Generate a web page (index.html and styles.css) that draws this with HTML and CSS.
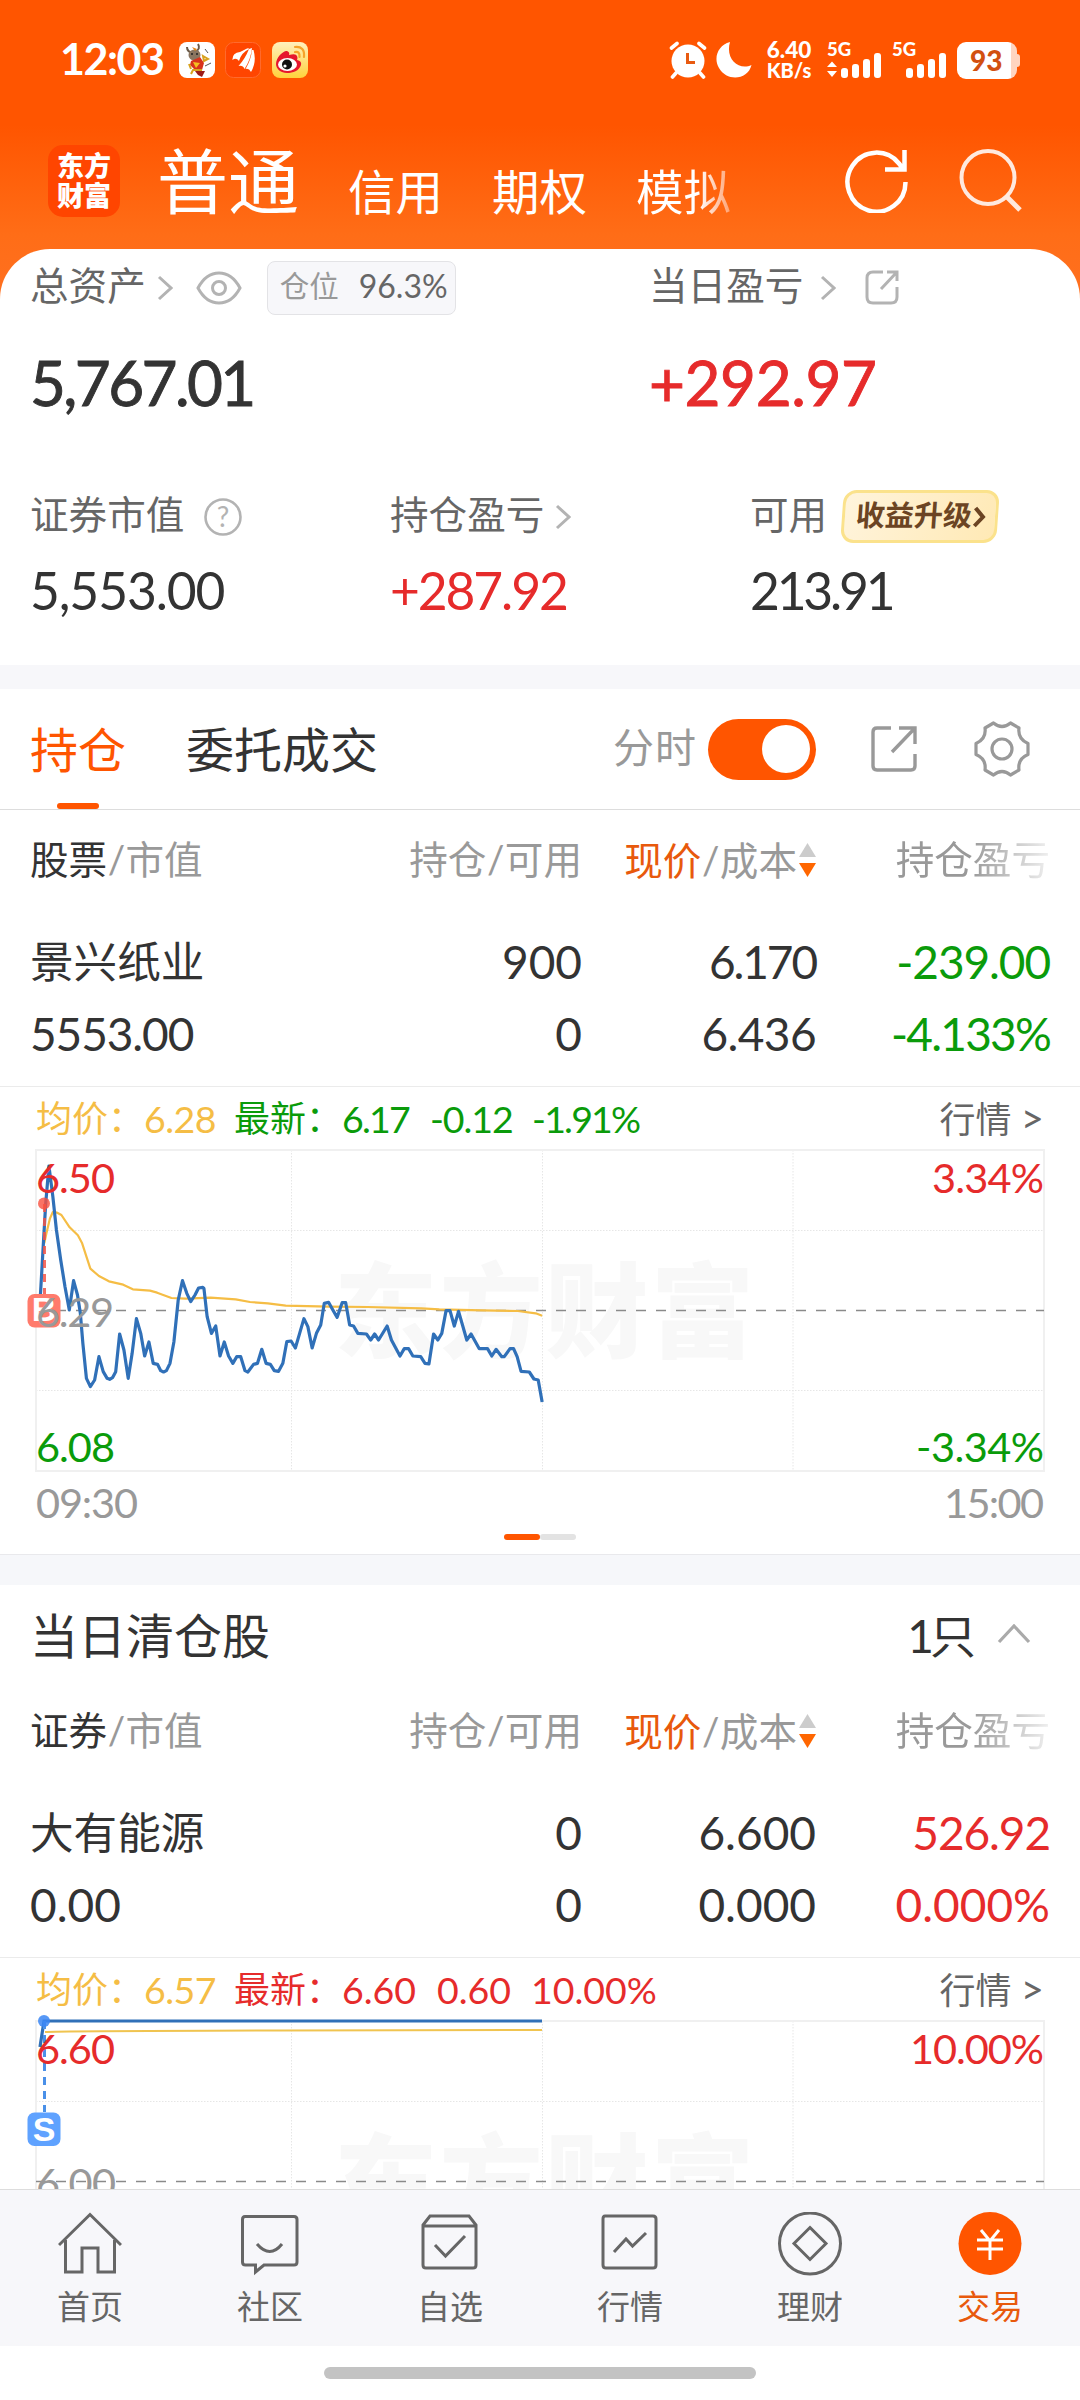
FILE: index.html
```html
<!DOCTYPE html>
<html lang="zh-CN">
<head>
<meta charset="utf-8">
<title>交易 - 持仓</title>
<link rel="stylesheet" href="styles.css">
</head>
<body>
<svg class="defs" width="0" height="0">
  <defs>
    <g id="grid">
      <path d="M36 90.5H1044M36 250.5H1044M291.5 10V331M542.5 10V331M793 10V331" stroke="#e6e6e6" stroke-width="1" stroke-dasharray="1.5 1.5"/>
      <rect x="36" y="10" width="1008" height="321" fill="none" stroke="#f0f0f0" stroke-width="2"/>
    </g>
    <g id="share" fill="none" stroke="currentColor">
      <path d="M20 2H6Q2 2 2 6V40Q2 44 6 44H40Q44 44 44 40V28M28 2H44V18M44 2L21 26"/>
    </g>
  </defs>
</svg>
<div class="app">
  <main class="scroll">
    <section class="hero">
      <div class="status">
        <div class="status-left">
          <span class="time">12:03</span>
          <svg width="36" height="36" viewBox="0 0 36 36"><rect width="36" height="36" rx="8" fill="#fff"/><path d="M8 5q0 5 6 6M19 2q3 5-3 8" stroke="#6b5a48" stroke-width="2" fill="none"/><ellipse cx="15.500" cy="13" rx="6" ry="5.500" fill="#8a7560"/><path d="M13 5l5 2-2 2z" fill="#e0861a"/><circle cx="13" cy="12" r="1" fill="#222"/><circle cx="18" cy="12" r="1" fill="#222"/><path d="M12 19l9-4 4 6-2 7-8-1-4-4z" fill="#d8331c"/><path d="M14 20l7 1-4 5z" fill="#f4c020"/><path d="M24 14l5 3-4 2zM10 22l2 5M12 32l2-4h9" stroke="#d8a21c" stroke-width="2" fill="none"/><path d="M16 29h10l-3 6-4-2z" fill="#9c1c18"/><path d="M26 24l6-3M26 7l3 4" stroke="#555" fill="none"/></svg>
          <svg width="36" height="36" viewBox="0 0 36 36"><rect x=".5" y=".5" width="35" height="35" rx="8" fill="#ff4500" stroke="#ff6a2e"/><path d="M7.500 18Q7 11 15 10L22 6.500Q24 6 24 7Q16 11 14 19Q11 15 7.500 18zM13.500 24Q20 17 24 7L27 6Q26 17 19.500 27Q18 23 13.500 24zM20.500 27Q26 18 27 8L28.500 8Q32 20 26 30Q24 26 20.500 27z" fill="#fff"/></svg>
          <svg width="36" height="36" viewBox="0 0 36 36"><defs><linearGradient id="wb" x2="0" y2="1"><stop stop-color="#fff0bd"/><stop offset="1" stop-color="#ffd23c"/></linearGradient></defs><rect width="36" height="36" rx="8" fill="url(#wb)"/><path d="M4 22C4 15 12 8 15 9Q18 10 17 13Q24 11 25 14Q26 16 25 18Q30 19 29 23C27 29 21 31 15 31C9 31 4 27 4 22z" fill="#e6162d"/><ellipse cx="15.500" cy="22.500" rx="9.500" ry="6.500" fill="#fff"/><circle cx="15" cy="22.500" r="5" fill="#111"/><circle cx="13" cy="24" r="1.600" fill="#fff"/><path d="M23 5Q33 4 32 15M23 10Q28 9 27.500 15" fill="none" stroke="#f5a32a" stroke-width="2.200" stroke-linecap="round"/></svg>
        </div>
        <div class="status-right">
          <svg class="alarm" width="38" height="38" viewBox="0 0 38 38"><g stroke="#fff" stroke-width="3.600" stroke-linecap="round"><path d="M2.500 7L8 2.500M35.500 7L30 2.500M7 32L3.500 36M31 32L34.500 36"/></g><circle cx="19" cy="20" r="16.500" fill="#fff"/><path d="M18.500 12V21.500H26" fill="none" stroke="#e85a10" stroke-width="3"/></svg>
          <svg class="moon" width="38" height="38" viewBox="0 0 38 38"><path d="M15 1C3 4-2 17 4 27C12 41 33 39 36.500 24C24 30 10 18 15 1z" fill="#fff"/></svg>
          <div class="speed"><span>6.40</span><span>KB/s</span></div>
          <div class="sig"><span>5G</span><svg width="56" height="26" viewBox="0 0 56 26" fill="#fff"><path d="M0 11L5 5.500L10 11zM0 15H10L5 21z" transform="translate(0 4)"/><rect x="14" y="16" width="7" height="10" rx="3"/><rect x="25" y="12" width="7" height="14" rx="3"/><rect x="36" y="7" width="7" height="19" rx="3"/><rect x="47" y="1" width="7" height="25" rx="3"/></svg></div>
          <div class="sig"><span>5G</span><svg width="56" height="26" viewBox="0 0 56 26" fill="#fff"><rect x="14" y="16" width="7" height="10" rx="3"/><rect x="25" y="12" width="7" height="14" rx="3"/><rect x="36" y="7" width="7" height="19" rx="3"/><rect x="47" y="1" width="7" height="25" rx="3"/></svg></div>
          <div class="battery"><span>93</span></div>
        </div>
      </div>
      <header class="topbar">
        <div class="logo"><span>东方</span><span>财富</span></div>
        <nav class="modes"><span class="mode-on">普通</span><span>信用</span><span>期权</span><span class="mode-fade">模拟</span></nav>
        <svg class="refresh" width="66" height="66" viewBox="0 0 66 66" fill="none" stroke="#fff" stroke-width="4.500"><path d="M61.500 35A29 29.500 0 1 1 55 16.500L58.500 21M60.500 3V22.500H41"/></svg>
        <svg width="66" height="66" viewBox="0 0 66 66" fill="none" stroke="#ffe9de" stroke-width="4"><circle cx="31" cy="30.500" r="26.500"/><path d="M50 50L63 63" stroke-width="5"/></svg>
      </header>
      <div class="summary">
        <div class="line assets">
          <div class="cell big-l"><span class="up">总资产</span><svg class="chev" width="16" height="26" viewBox="0 0 16 26"><path d="M2 2L14 13L2 24"/></svg>
            <svg class="eye" width="46" height="34" viewBox="0 0 46 34" fill="none" stroke="#b3b3b3" stroke-width="3"><path d="M2 17Q10 2 23 2T44 17Q36 32 23 32T2 17z"/><circle cx="23" cy="17" r="6.500"/></svg>
            <span class="ratio"><i>仓位</i><b>96.3%</b></span></div>
          <div class="cell"><span class="up">当日盈亏</span><svg class="chev c2" width="16" height="26" viewBox="0 0 16 26"><path d="M2 2L14 13L2 24"/></svg>
            <svg class="share-s" width="34" height="35" viewBox="0 0 34 35" fill="none" stroke="#b3b3b3" stroke-width="3"><path d="M18 2H8Q2 2 2 8V27Q2 33 8 33H26Q32 33 32 27V17M22 2H32V11M31.500 2.500L16 19"/></svg></div>
        </div>
        <div class="line totals"><span class="big-l ls-26">5,767.01</span><span class="red pnl">+292.97</span></div>
        <div class="thirds labels">
          <div class="cell"><span class="up">证券市值</span><svg class="help" width="38" height="38" viewBox="0 0 38 38"><circle cx="19" cy="19" r="17.500" fill="none" stroke="#b3b3b3" stroke-width="2.600"/><text x="19" y="29" text-anchor="middle" font-size="28" fill="#b3b3b3">?</text></svg></div>
          <div class="cell"><span class="up">持仓盈亏</span><svg class="chev c3" width="16" height="26" viewBox="0 0 16 26"><path d="M2 2L14 13L2 24"/></svg></div>
          <div class="cell"><span class="up">可用</span><span class="badge"><span>收益升级</span><svg width="13" height="22" viewBox="0 0 13 22"><path d="M2 2L10 11L2 20" fill="none" stroke="#6b4423" stroke-width="4"/></svg></span></div>
        </div>
        <div class="thirds values"><span class="ls-11">5,553.00</span><span class="red ls-21">+287.92</span><span class="ls-32">213.91</span></div>
      </div>
    </section>
    <div class="gap"></div>
    <section>
      <div class="tabs">
        <span class="tab on">持仓</span><span class="tab">委托成交</span>
        <span class="minute">分时</span><span class="toggle"></span>
        <svg class="t-share" width="46" height="46" viewBox="0 0 46 46" stroke-width="3.400"><use href="#share"/></svg>
        <svg class="gear" width="56" height="56" viewBox="0 0 56 56" fill="none" stroke="#999" stroke-width="3.200" stroke-linejoin="round"><path d="M19.500 2Q28 9 36.500 2L45 7Q43.500 18 54 22.500V33.500Q43.500 38 45 49L36.500 54Q28 47 19.500 54L11 49Q12.500 38 2 33.500V22.500Q12.500 18 11 7z"/><circle cx="28" cy="28" r="10"/></svg>
      </div>
      <div class="cols head">
        <span><em>股票</em><s>/</s>市值</span><span>持仓<s>/</s>可用</span>
        <span class="sort"><em class="or">现价</em><s>/</s>成本<svg width="17" height="36" viewBox="0 0 17 36"><path d="M8.500 1L17 15H0z" fill="#ccc"/><path d="M0 21H17L8.500 35z" fill="#f60"/></svg></span><span class="fade">持仓盈亏</span>
      </div>
      <div class="rows">
        <div class="cols row"><span class="name">景兴纸业</span><span>900</span><span class="ls-21">6.170</span><span class="green ls-11">-239.00</span></div>
        <div class="cols row"><span class="ls-11">5553.00</span><span>0</span><span class="ls-06">6.436</span><span class="green ls-18">-4.133%</span></div>
      </div>
      <div class="quote">
        <span class="avg">均价：</span><span class="avg q1">6.28</span><span class="green q2">最新：</span><span class="green q3 ls-18">6.17</span><span class="green q4 ls-11">-0.12</span><span class="green ls-18">-1.91%</span><span class="more">行情 <i>&gt;</i></span>
      </div>
      <svg class="chart" width="1080" height="390" viewBox="0 0 1080 390">
        <use href="#grid"/>
        <text class="mark" x="334" y="210" textLength="420">东方财富</text>
        <path d="M36 170.500H1044" stroke="#8a8a8a" stroke-width="1.300" stroke-dasharray="10 10"/>
        <g transform="translate(0 -60) scale(.357143 .333333)" fill="none" stroke-linejoin="round">
          <polyline vector-effect="non-scaling-stroke" stroke="#f5bd45" stroke-width="2.200" points="124,490 130,460 140,415 148,396 160,398 172,405 195,442 218,466 230,490 242,530 253,566 277,588 305,604 345,614 372,628 420,632 440,638 480,654 520,656 590,653 660,658 700,666 750,670 800,677 920,680 1030,681 1180,685 1230,688 1350,691 1450,693 1500,700 1518,707"/>
          <polyline vector-effect="non-scaling-stroke" stroke="#3070b8" stroke-width="3.200" points="113,648 122,480 128,370 137,258 148,350 158,450 170,540 182,620 194,690 206,602 217,645 225,700 232,790 242,895 253,920 265,900 277,830 289,875 300,895 307,898 315,893 324,875 335,762 347,810 359,895 370,820 382,716 394,760 405,828 417,786 429,850 441,853 450,872 458,876 466,872 476,850 487,785 499,660 511,602 523,640 534,665 546,645 556,624 568,622 571,625 580,710 592,760 604,738 616,828 628,786 640,828 652,850 663,830 674,830 686,872 694,876 710,853 721,850 733,808 745,850 757,853 768,872 780,874 792,850 803,785 815,783 827,804 839,760 851,716 862,740 874,804 886,760 898,735 908,670 920,667 932,690 944,712 958,668 968,668 979,735 990,738 1002,760 1026,762 1038,780 1049,762 1060,780 1084,738 1096,780 1120,828 1132,806 1144,806 1156,828 1178,830 1190,850 1201,852 1214,762 1226,780 1237,760 1249,692 1260,692 1272,738 1284,694 1307,780 1319,762 1342,806 1365,806 1377,828 1389,808 1405,830 1412,830 1428,806 1438,806 1448,830 1459,874 1482,876 1495,897 1507,900 1518,966"/>
        </g>
        <path d="M44.500 64V154" stroke="#f25548" stroke-opacity=".85" stroke-width="3" stroke-dasharray="8 6"/>
        <circle cx="44" cy="63.500" r="6" fill="#f9503f" fill-opacity=".8"/>
        <rect x="27.500" y="154" width="33" height="33.500" rx="7" fill="#ff7b6c"/>
        <text class="flag" x="44" y="181" text-anchor="middle">B</text>
        <text class="red" x="36" y="53" textLength="79">6.50</text>
        <text class="gray" x="36" y="187" textLength="78">6.29</text>
        <text class="green" x="36" y="322" textLength="79">6.08</text>
        <text class="red" x="932" y="53" textLength="112">3.34%</text>
        <text class="green" x="916" y="322" textLength="128">-3.34%</text>
        <text class="gray" x="36" y="378" textLength="102">09:30</text>
        <text class="gray" x="944" y="378" textLength="100">15:00</text>
      </svg>
      <div class="pager"><i></i><i></i></div>
    </section>
    <div class="gap gap2"></div>
    <section>
      <div class="cleared"><span>当日清仓股</span><span class="count"><b>1</b>只</span><svg width="34" height="20" viewBox="0 0 34 20"><path d="M2 18L17 2L32 18" fill="none" stroke="#aaa" stroke-width="3.200"/></svg></div>
      <div class="cols head">
        <span><em>证券</em><s>/</s>市值</span><span>持仓<s>/</s>可用</span>
        <span class="sort"><em class="or">现价</em><s>/</s>成本<svg width="17" height="36" viewBox="0 0 17 36"><path d="M8.500 1L17 15H0z" fill="#ccc"/><path d="M0 21H17L8.500 35z" fill="#f60"/></svg></span><span class="fade">持仓盈亏</span>
      </div>
      <div class="rows">
        <div class="cols row"><span class="name">大有能源</span><span>0</span><span>6.600</span><span class="red ls-11">526.92</span></div>
        <div class="cols row"><span>0.00</span><span>0</span><span>0.000</span><span class="red">0.000%</span></div>
      </div>
      <div class="quote">
        <span class="avg">均价：</span><span class="avg q1">6.57</span><span class="red q2">最新：</span><span class="red q3b">6.60</span><span class="red q4b">0.60</span><span class="red">10.00%</span><span class="more">行情 <i>&gt;</i></span>
      </div>
      <svg class="chart" width="1080" height="390" viewBox="0 0 1080 390">
        <use href="#grid"/>
        <text class="mark" x="334" y="210" textLength="420">东方财富</text>
        <path d="M36 170.500H1044" stroke="#8a8a8a" stroke-width="1.300" stroke-dasharray="10 10"/>
        <path d="M45 21Q60 19.500 542 19" fill="none" stroke="#f0c450" stroke-width="2"/>
        <path d="M40 36L44 10H542" fill="none" stroke="#3070b8" stroke-width="3.200"/>
        <path d="M44.500 10V101" stroke="#4a90e8" stroke-width="3" stroke-dasharray="8 6"/>
        <circle cx="44" cy="10" r="6" fill="#3a86f5" fill-opacity=".85"/>
        <rect x="27.500" y="101.500" width="33" height="33.500" rx="7" fill="#5fa2ff"/>
        <text class="flag" x="44" y="130" text-anchor="middle">S</text>
        <text class="red" x="36" y="53" textLength="79">6.60</text>
        <text class="gray" x="36" y="187" textLength="80">6.00</text>
        <text class="red" x="910" y="53" textLength="134">10.00%</text>
      </svg>
    </section>
  </main>
  <nav class="nav">
    <div><svg width="64" height="64" viewBox="0 0 64 64"><path d="M1 33L32 2.500L63 33M7.500 28V60H24V36H40V60H56.500V28"/></svg><span>首页</span></div>
    <div><svg width="64" height="64" viewBox="0 0 64 64"><path d="M7 4.500H56Q59 4.500 59 7.500V50Q59 53 56 53H26L17.500 60V53H7.500Q4.500 53 4.500 50V7.500Q4.500 4.500 7 4.500M19 32Q32 47 44 32"/></svg><span>社区</span></div>
    <div><svg width="64" height="64" viewBox="0 0 64 64"><path d="M5 13L12 4H51L58 13V53Q58 56 55 56H8Q5 56 5 53zM5 14H58M17 33L27.500 44L47 24"/></svg><span>自选</span></div>
    <div><svg width="64" height="64" viewBox="0 0 64 64"><path d="M7 4H55Q58 4 58 7V53Q58 56 55 56H8Q5 56 5 53V7Q5 4 7 4M16 40L28 27L34.500 34L48 21"/></svg><span>行情</span></div>
    <div><svg width="64" height="64" viewBox="0 0 64 64"><circle cx="32" cy="31.500" r="30.500"/><path d="M32 15.500L48 31.500L32 47.500L16 31.500z"/></svg><span>理财</span></div>
    <div class="active"><svg width="64" height="64" viewBox="0 0 64 64"><circle cx="32" cy="31.500" r="31.500" fill="#f50" stroke="none"/><path d="M23 18L32 29L41 18M32 29V48M19 28H45M19 37H45" stroke="#fff"/></svg><span>交易</span></div>
  </nav>
  <div class="homebar"><i></i></div>
</div>
</body>
</html>
```

FILE: styles.css
```css
* { box-sizing: border-box; }
body { margin: 0; background: #fff; color: #333; font-family: Lato, "Noto Sans CJK SC", sans-serif; }
i, em { font-style: normal; }
s { text-decoration: none; display: inline-block; width: 18.4px; text-align: center; }
svg { flex: none; display: block; }
.defs { position: absolute; }
.app { width: 1080px; height: 2400px; display: flex; flex-direction: column; overflow: hidden; }
.scroll { flex: 1; min-height: 0; overflow: hidden; }
.red { color: #e62b2b; fill: #e62b2b; }
.green { color: #0a9b0a; fill: #0a9b0a; }
.gray { fill: #999; }

.ls-06 { letter-spacing: -0.6px; }
.ls-11 { letter-spacing: -1.1px; }
.ls-18 { letter-spacing: -1.8px; }
.ls-21 { letter-spacing: -2.1px; }
.ls-26 { letter-spacing: -2.6px; }
.ls-32 { letter-spacing: -3.2px; }

.hero { background: linear-gradient(#ff5500 125px, #ff6d17 235px, #ff7020 300px); }
.status { height: 120px; padding: 0 59px 0 60px; display: flex; justify-content: space-between; color: #fff; }
.status-left, .status-right { display: flex; align-items: center; height: 120px; }
.status-left { gap: 10.5px; }
.time { font-size: 43px; font-weight: 700; width: 108px; letter-spacing: -1.5px; line-height: 50px; padding-bottom: 2px; }
.alarm { margin-right: 8px; }
.moon { margin-right: 12px; }
.speed { display: flex; flex-direction: column; width: 48px; margin-right: 14px; text-align: center; font-size: 22.5px; line-height: 21px; font-weight: 900; }
.speed span:last-child { font-size: 20px; }
.sig { width: 55px; height: 36px; position: relative; margin-right: 10px; }
.sig span { position: absolute; left: 0; top: -3px; font-size: 18.5px; line-height: 20px; font-weight: 900; }
.sig svg { margin-top: 10px; }
.battery { width: 60px; height: 37px; border-radius: 9px; background: linear-gradient(90deg, #fff 54px, #ffd5c0 54px); color: #d2500f; font-size: 28px; font-weight: 900; line-height: 37px; padding-left: 13px; margin-right: 4px; position: relative; }
.battery::after { content: ""; position: absolute; left: 60px; top: 12px; width: 3px; height: 13px; border-radius: 0 3px 3px 0; background: #ffd5c0; }

.topbar { height: 129px; display: flex; padding-left: 48px; }
.logo { width: 72px; height: 72px; margin-top: 25px; border-radius: 15px; background: #ff4500; color: #fff; display: flex; flex-direction: column; align-items: center; justify-content: center; font-size: 27px; line-height: 30px; font-weight: 900; }
.modes { display: flex; align-items: flex-end; color: #fff; margin-left: 37px; height: 101px; width: 687px; font-size: 47.5px; line-height: 58px; }
.modes span { width: 144px; }
.modes .mode-on { font-size: 71px; line-height: 74px; width: 191px; padding-bottom: 3px; }
.modes .mode-fade { background: linear-gradient(90deg, #fff 62px, #ffa070 95px); -webkit-background-clip: text; background-clip: text; color: transparent; }
.refresh { margin-right: 47px; }
.topbar > svg { margin-top: 27px; }

.summary { background: #fff; border-radius: 50px 50px 0 0; height: 416px; padding-left: 30px; }
.line { display: flex; align-items: center; }
.cell { display: flex; align-items: center; }
.up { line-height: 56px; padding-bottom: 5px; }
.big-l { width: 619px; }
.assets { height: 77px; font-size: 38.600px; color: #666; }
.chev { fill: none; stroke: #b3b3b3; stroke-width: 3; margin-left: 11px; }
.c2 { margin-left: 17px; }
.c3 { margin-left: 11px; }
.eye { margin-left: 23px; }
.share-s { margin-left: 29px; }
.ratio { display: flex; align-items: center; width: 189px; height: 54px; margin-left: 25px; padding-left: 12px; border: 1px solid #e3e3e6; border-radius: 8px; background: #f7f7fa; font-size: 29.500px; line-height: 48px; padding-bottom: 3px; color: #999; }
.ratio b { font-weight: 400; color: #666; font-size: 32px; margin-left: 20px; }
.totals { height: 113px; font-size: 62px; padding-bottom: 2px; -webkit-text-stroke: 0.9px currentColor; }
.pnl { letter-spacing: -0.4px; }
.thirds { display: grid; grid-template-columns: 360px 360px 1fr; align-items: center; height: 60px; }
.labels { margin-top: 47px; font-size: 38.600px; color: #666; }
.values { margin-top: 13px; font-size: 51.500px; }
.help { margin-left: 20px; }
.badge { display: flex; align-items: center; width: 156px; height: 53px; margin-left: 15px; padding: 0 0 3px 11px; border: 3px solid #fbe28c; border-radius: 13px; background: linear-gradient(110deg, #fff4dc, #ffe9b5); color: #6b4423; font-size: 29px; line-height: 44px; font-weight: 700; transform: skewX(-4deg); }
.badge svg { margin: 3px 0 0 1px; }

.gap { height: 24px; background: #f7f7fa; }
.gap2 { height: 31px; background: #f6f7fa; border-top: 1px solid #e9e9ec; }
.tabs { height: 121px; border-bottom: 1px solid #ddd; display: flex; align-items: center; padding-left: 30px; font-size: 48px; }
.tab { height: 120px; line-height: 121px; }
.tab.on { color: #f50; position: relative; margin-right: 60px; }
.tab.on::after { content: ""; position: absolute; left: 27px; bottom: 0; width: 42px; height: 6px; border-radius: 3px; background: #f50; }
.minute { margin-left: auto; font-size: 41px; line-height: 60px; padding-bottom: 3px; color: #999; letter-spacing: 1px; }
.toggle { width: 108px; height: 61px; border-radius: 31px; background: #f50; margin-left: 11px; padding: 6px; display: flex; justify-content: flex-end; }
.toggle::after { content: ""; width: 48px; height: 48px; border-radius: 50%; background: #fff; }
.t-share { color: #999; margin-left: 55px; }
.gear { margin: 0 50px 0 57px; }

.cols { display: grid; grid-template-columns: 300px 252px 234px 234px; padding-left: 30px; text-align: right; }
.cols > :first-child { text-align: left; }
.head { height: 100px; line-height: 98px; font-size: 38.600px; color: #999; white-space: nowrap; }
.head em { color: #333; }
.head .or { color: #e8590c; }
.sort { display: flex; justify-content: flex-end; align-items: center; }
.sort svg { margin-left: 2px; }
.fade { width: 155px; justify-self: end; -webkit-mask-image: linear-gradient(90deg, #000 75px, rgba(0,0,0,.15)); mask-image: linear-gradient(90deg, #000 75px, rgba(0,0,0,.15)); }
.rows { padding: 16px 0; }
.row { height: 72px; line-height: 72px; font-size: 46px; }
.name { font-size: 43.600px; line-height: 71px; }
.quote { height: 54px; padding: 10px 36px 0 36px; border-top: 1px solid #ebebeb; display: flex; align-items: center; font-size: 37.500px; line-height: 43px; white-space: nowrap; }
.avg { color: #f5bd45; }
.avg:first-child, .q2 { font-size: 36px; width: 108px; }
.q1 { width: 90px; letter-spacing: -0.5px; }
.q3 { width: 88px; }
.q3b { width: 95px; }
.q4 { width: 102px; }
.q4b { width: 94px; }
.more { margin-left: auto; color: #666; font-size: 36px; }
.more i { font-size: 40px; }
.chart { font-size: 41.500px; }
.mark { font-size: 103px; font-weight: 900; fill: #f8f8f8; }
.flag { font-family: "Liberation Sans", sans-serif; font-weight: 700; font-size: 34px; fill: #fff; }
.pager { display: flex; justify-content: center; padding: 4px 0 14px; }
.pager i { width: 36px; height: 6px; border-radius: 3px; background: #f50; }
.pager i + i { background: #e3e3e3; }
.cleared { height: 96px; padding: 0 49px 1px 30px; display: flex; align-items: center; font-size: 48px; }
.cleared svg { margin-top: 2px; }
.count { margin-left: auto; margin-right: 21px; font-size: 46px; }
.count b { font-weight: 400; letter-spacing: -4px; }

.nav { height: 157px; background: #f7f7fa; border-top: 1px solid #ddd; display: grid; grid-template-columns: repeat(6, 1fr); color: #666; font-size: 33px; }
.nav div { display: flex; flex-direction: column; align-items: center; padding-top: 22px; }
.nav svg { fill: none; stroke: #666; stroke-width: 3; }
.nav span { line-height: 40px; margin-top: 10px; }
.nav .active { color: #e8590c; }
.homebar { height: 54px; display: flex; justify-content: center; padding-top: 21px; }
.homebar i { width: 432px; height: 12px; border-radius: 6px; background: #c3c3c3; }
```
